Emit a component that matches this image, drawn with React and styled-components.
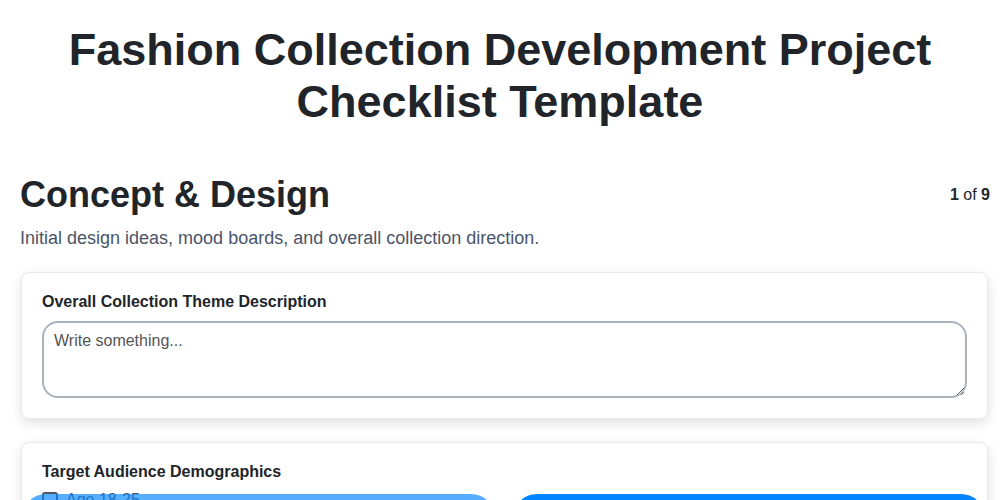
import React from "react";
import styled, { createGlobalStyle } from "styled-components";

const GlobalStyle = createGlobalStyle`
  html, body { margin: 0; padding: 0; background: #ffffff; }
  body { font-family: "Liberation Sans", Arial, sans-serif; color: #212529; overflow: hidden; }
  * { box-sizing: border-box; }
`;

const Page = styled.div`
  padding: 24px 10px 120px 20px;
`;

const Title = styled.h1`
  margin: 0 0 45px -10px;
  padding: 0 40px;
  text-align: center;
  font-size: 45px;
  line-height: 52px;
  font-weight: 700;
  color: #212529;
`;

const SectionHeader = styled.div`
  display: flex;
  justify-content: space-between;
  align-items: center;
`;

const SectionTitle = styled.h2`
  margin: 0;
  font-size: 36px;
  line-height: 44px;
  font-weight: 700;
  color: #212529;
`;

const Counter = styled.div`
  font-size: 16px;
  color: #212529;
  b { font-weight: 700; }
`;

const Description = styled.p`
  margin: 9px 0 22px;
  font-size: 18px;
  line-height: 24px;
  color: #4a5568;
`;

const Card = styled.div`
  margin: 0 2px 23px 1px;
  padding: 20px;
  background: #fff;
  border: 1px solid #e9e9ef;
  border-radius: 8px;
  box-shadow: 0 4px 12px rgba(0, 0, 0, 0.12);
`;

const Label = styled.label`
  display: block;
  font-size: 16px;
  line-height: 18px;
  font-weight: 700;
  color: #212529;
  margin-bottom: 10px;
`;

const TextArea = styled.textarea`
  display: block;
  width: 100%;
  height: 77px;
  padding: 9px 10px;
  border: 2px solid #aab3bc;
  border-radius: 16px;
  font-family: "Liberation Sans", Arial, sans-serif;
  font-size: 16px;
  color: #333;
  resize: vertical;
  &::placeholder { color: #555; }
`;

const CheckRow = styled.label`
  display: flex;
  align-items: center;
  gap: 8px;
  font-size: 16px;
  color: #4a5568;
`;

const Box = styled.span`
  width: 16px;
  height: 16px;
  border: 2px solid #4a5568;
  border-radius: 3px;
`;

const Nav = styled.div`
  position: fixed;
  left: 22px;
  right: 15px;
  bottom: -54px;
  display: flex;
  gap: 18px;
`;

const NavButton = styled.button`
  flex: 1;
  height: 60px;
  border: none;
  border-radius: 24px;
  background: #0084ff;
  color: #fff;
  font-family: "Liberation Sans", Arial, sans-serif;
  font-size: 16px;
  font-weight: 700;
  opacity: ${(p) => (p.$disabled ? 0.66 : 1)};
`;

export default function App() {
  return (
    <>
      <GlobalStyle />
      <Page>
        <Title>Fashion Collection Development Project Checklist Template</Title>
        <SectionHeader>
          <SectionTitle>Concept &amp; Design</SectionTitle>
          <Counter>
            <b>1</b> of <b>9</b>
          </Counter>
        </SectionHeader>
        <Description>Initial design ideas, mood boards, and overall collection direction.</Description>
        <Card>
          <Label>Overall Collection Theme Description</Label>
          <TextArea placeholder="Write something..." />
        </Card>
        <Card>
          <Label>Target Audience Demographics</Label>
          <CheckRow>
            <Box />
            Age 18-25
          </CheckRow>
        </Card>
      </Page>
      <Nav>
        <NavButton $disabled>Previous</NavButton>
        <NavButton>Next</NavButton>
      </Nav>
    </>
  );
}
